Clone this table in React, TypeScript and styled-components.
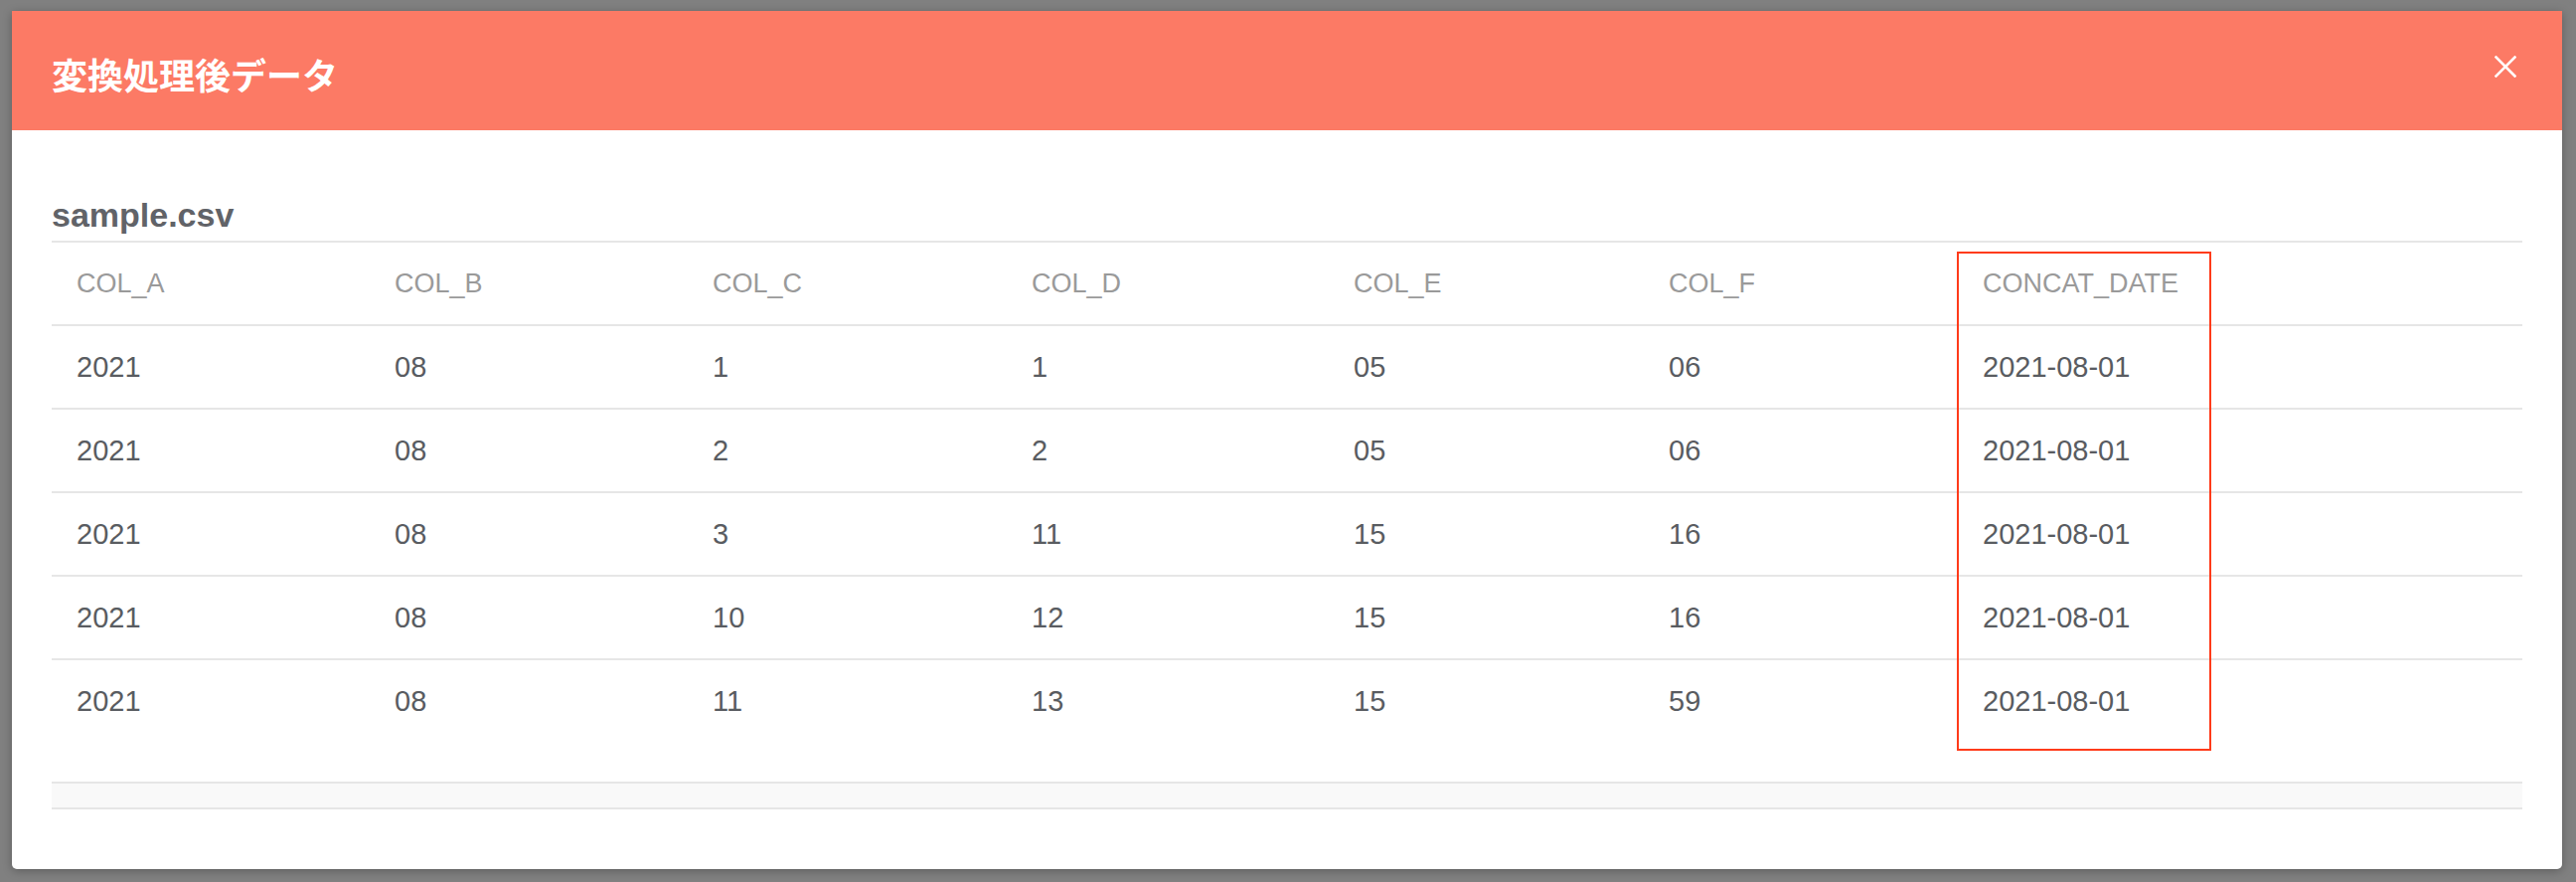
import React from "react";
import styled, { createGlobalStyle } from "styled-components";

const GlobalStyle = createGlobalStyle`
  html, body {
    margin: 0;
    padding: 0;
    background: #808080;
  }

  * {
    box-sizing: border-box;
  }
`;

interface CellProps {
  isHead?: boolean;
}

const COLUMN_WIDTHS = "320px 320px 321px 324px 317px 316px 1fr";

const columns = ["COL_A", "COL_B", "COL_C", "COL_D", "COL_E", "COL_F", "CONCAT_DATE"];

const rows = [
  ["2021", "08", "1", "1", "05", "06", "2021-08-01"],
  ["2021", "08", "2", "2", "05", "06", "2021-08-01"],
  ["2021", "08", "3", "11", "15", "16", "2021-08-01"],
  ["2021", "08", "10", "12", "15", "16", "2021-08-01"],
  ["2021", "08", "11", "13", "15", "59", "2021-08-01"],
];

const Backdrop = styled.div`
  width: 100%;
  height: 887px;
  padding: 11px 14px 13px 12px;
  background: #808080;
`;

const Modal = styled.section`
  display: flex;
  flex-direction: column;
  height: 100%;
  background: #fff;
  border-radius: 0 0 5px 5px;
  box-shadow: 0 2px 10px rgba(0, 0, 0, 0.28);
  overflow: hidden;
`;

const ModalHeader = styled.header`
  display: flex;
  align-items: center;
  justify-content: space-between;
  height: 120px;
  padding: 0 46px 0 40px;
  background: #fc7a65;
`;

const ModalTitle = styled.h1`
  margin: 6px 0 0;
  color: #fff;
  font-family: "Noto Sans CJK JP", "Noto Sans", sans-serif;
  font-weight: 700;
  font-size: 36px;
  line-height: 1;
`;

const CloseButton = styled.button`
  display: flex;
  align-items: center;
  justify-content: center;
  width: 22px;
  height: 22px;
  margin-bottom: 9px;
  padding: 0;
  background: transparent;
  border: none;
  cursor: pointer;
`;

const ModalBody = styled.div`
  display: flex;
  flex-direction: column;
  padding: 60px 40px;
`;

const FileName = styled.h2`
  margin: 0;
  height: 51px;
  color: #616368;
  font-family: "Liberation Sans", Arial, sans-serif;
  font-weight: 700;
  font-size: 34px;
  line-height: 51px;
`;

const TableWrap = styled.div`
  position: relative;
  display: flex;
  flex-direction: column;
`;

const Row = styled.div`
  display: grid;
  grid-template-columns: ${COLUMN_WIDTHS};
  align-items: center;
  height: 84px;
  border-top: 2px solid #e6e6e6;
`;

const Cell = styled.div<CellProps>`
  padding-left: 25px;
  color: ${(props) => props.isHead ? '#9a9a9a' : '#595c61'};
  font-family: "Liberation Sans", Arial, sans-serif;
  font-weight: 400;
  font-size: ${(props) => props.isHead ? '27px' : '29px'};
  white-space: nowrap;
`;

// red annotation drawn over the CONCAT_DATE column
const Highlight = styled.div`
  position: absolute;
  top: 11px;
  left: 1917px;
  width: 256px;
  height: 502px;
  border: 2px solid #ff3b1a;
  pointer-events: none;
`;

const TableFooter = styled.div`
  height: 28px;
  margin-top: 40px;
  background: #f9f9f9;
  border-top: 2px solid #e6e6e6;
  border-bottom: 2px solid #e6e6e6;
`;

const CloseIcon = () => (
  <svg width="22" height="22" viewBox="0 0 22 22" fill="none">
    <path d="M1.5 1.5L20.5 20.5M20.5 1.5L1.5 20.5" stroke="#fff" strokeWidth="2.6" strokeLinecap="square" />
  </svg>
);

export default function App() {
  return (
    <>
      <GlobalStyle />
      <Backdrop>
        <Modal>
          <ModalHeader>
            <ModalTitle>変換処理後データ</ModalTitle>
            <CloseButton aria-label="close">
              <CloseIcon />
            </CloseButton>
          </ModalHeader>
          <ModalBody>
            <FileName>sample.csv</FileName>
            <TableWrap>
              <Row>
                {columns.map((col) => (
                  <Cell key={col} isHead>{col}</Cell>
                ))}
              </Row>
              {rows.map((row, i) => (
                <Row key={i}>
                  {row.map((value, j) => (
                    <Cell key={j}>{value}</Cell>
                  ))}
                </Row>
              ))}
              <Highlight />
            </TableWrap>
            <TableFooter />
          </ModalBody>
        </Modal>
      </Backdrop>
    </>
  );
}
